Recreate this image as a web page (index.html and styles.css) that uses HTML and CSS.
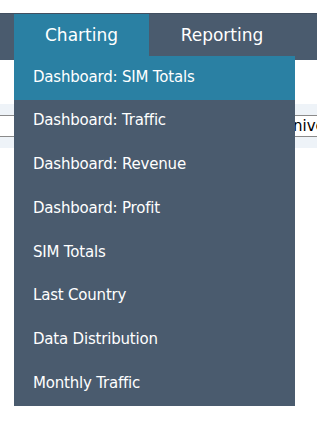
FILE: index.html
```html
<!DOCTYPE html>
<html>
<head>
<meta charset="utf-8">
<link rel="stylesheet" href="styles.css">
</head>
<body>
<div class="top-space"></div>
<nav class="nav">
  <div class="tab tab-active">Charting
    <ul class="dropdown">
      <li class="item item-active">Dashboard: SIM Totals</li>
      <li class="item">Dashboard: Traffic</li>
      <li class="item">Dashboard: Revenue</li>
      <li class="item">Dashboard: Profit</li>
      <li class="item">SIM Totals</li>
      <li class="item">Last Country</li>
      <li class="item">Data Distribution</li>
      <li class="item">Monthly Traffic</li>
    </ul>
  </div>
  <div class="tab">Reporting</div>
</nav>
<div class="gap"></div>
<div class="band">
  <div class="field field-left"></div>
  <div class="field field-right">Universe</div>
</div>
</body>
</html>
```
FILE: styles.css
```css
html, body {
  margin: 0;
  padding: 0;
  background: #ffffff;
  font-family: "DejaVu Sans", Verdana, sans-serif;
}
body {
  min-height: 427px;
  overflow: hidden;
}
.top-space {
  height: 13px;
}
.nav {
  height: 47px;
  background: #4a5b6e;
  border-top: 1px solid #414f60;
  box-sizing: border-box;
  display: flex;
  padding-left: 14px;
  position: relative;
  z-index: 2;
}
.tab {
  width: 146px;
  color: #ffffff;
  font-size: 17px;
  display: flex;
  justify-content: center;
  align-items: center;
  height: 43px;
  padding-bottom: 2px;
  box-sizing: border-box;
  position: relative;
}
.tab-active {
  width: 135px;
  background: #2a80a3;
}
.dropdown {
  position: absolute;
  top: 42px;
  left: 0;
  width: 281px;
  margin: 0;
  padding: 0;
  list-style: none;
  background: #4a5b6e;
}
.item {
  height: 43.75px;
  box-sizing: border-box;
  display: flex;
  align-items: center;
  padding-left: 19px;
  padding-bottom: 3px;
  font-size: 15px;
  letter-spacing: -0.2px;
  color: #ffffff;
}
.item-active {
  height: 44px;
  background: #2a80a3;
}
.gap {
  height: 44px;
}
.band {
  height: 44px;
  background: #eef3f8;
  display: flex;
  align-items: center;
}
.field {
  height: 22px;
  box-sizing: border-box;
  border-top: 1px solid #8a8a8a;
  border-bottom: 1px solid #8a8a8a;
  background: #ffffff;
}
.field-left {
  width: 282px;
}
.field-right {
  flex: 1;
  font-size: 15px;
  color: #000;
  line-height: 20px;
  white-space: nowrap;
  overflow: hidden;
}
```
